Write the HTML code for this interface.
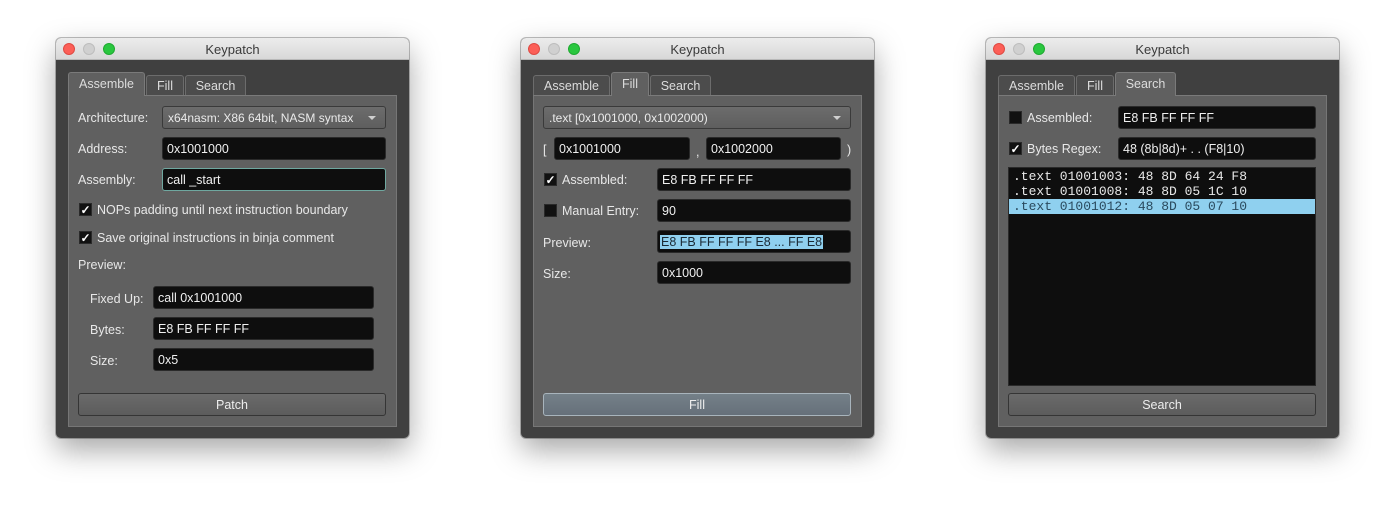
<!DOCTYPE html>
<html><head><meta charset="utf-8"><style>
*{box-sizing:border-box;margin:0;padding:0}
body{width:1395px;height:513px;background:#fff;position:relative;overflow:hidden;font-family:"Liberation Sans",sans-serif;font-size:12.5px;color:#e6e6e6}
.win{position:absolute;top:38px;width:353px;height:400px;background:#404040;border-radius:5px;box-shadow:0 12px 30px rgba(0,0,0,.35),0 0 0 1px rgba(0,0,0,.25);overflow:hidden}
.tb{position:absolute;left:0;top:0;width:353px;height:22px;background:linear-gradient(#ececec,#d8d8d8);color:#3a3a3a;text-align:center;line-height:23px;font-size:13px;border-bottom:1px solid #b8b8b8}
.dot{position:absolute;top:5px;width:12px;height:12px;border-radius:50%}
.a{position:absolute}
.pane{position:absolute;left:12px;top:57px;width:329px;height:332px;background:#606060;border:1px solid #767676;border-top-color:#7a7a7a}
.tab{position:absolute;top:37px;height:20px;background:#4c4c4c;border:1px solid #6c6c6c;border-bottom:none;border-radius:3px 3px 0 0;text-align:center;line-height:21px;color:#dcdcdc}
.tab.on{top:34px;height:24px;background:#606060;border-color:#7a7a7a;line-height:22px;z-index:2}
.f{position:absolute;height:23px;background:#0e0e0e;border-radius:3px;border:1px solid #2a2a2a;padding-left:4px;line-height:22px;color:#f0f0f0;white-space:nowrap}
.lbl{position:absolute;line-height:16px;color:#e8e8e8;white-space:nowrap}
.cb{position:absolute;width:13px;height:13px;background:#111;border:1px solid #2a2a2a;color:#fff;font-size:12px;line-height:12px;text-align:center;font-weight:bold}
.combo{position:absolute;height:23px;background:linear-gradient(#6c6c6c,#5e5e5e);border:1px solid #3a3a3a;border-radius:3px;padding-left:5px;line-height:22px;color:#eaeaea;font-size:12px;white-space:nowrap;overflow:hidden}
.combo:after{content:"";position:absolute;right:9px;top:9px;border-left:4px solid transparent;border-right:4px solid transparent;border-top:4px solid #cfcfcf}
.btn{position:absolute;left:22px;top:355px;width:308px;height:23px;background:linear-gradient(#6a6a6a,#5c5c5c);border:1px solid #353535;border-radius:3px;text-align:center;line-height:22px;color:#eee}
.mono{font-family:"Liberation Mono",monospace;font-size:13px;line-height:15px;height:15px;padding-left:4px;color:#e8e8e8;white-space:pre}
</style></head><body>

<!-- Window 1 -->
<div class="win" style="left:56px">
 <div class="tb">Keypatch</div>
 <div class="dot" style="left:7px;background:#fc5f57;border:1px solid #de4a43"></div>
 <div class="dot" style="left:27px;background:#d0d0d0;border:1px solid #bdbdbd"></div>
 <div class="dot" style="left:47px;background:#2ac73f;border:1px solid #1faa31"></div>
 <div class="pane"></div>
 <div class="tab on" style="left:12px;width:77px">Assemble</div>
 <div class="tab" style="left:90px;width:38px">Fill</div>
 <div class="tab" style="left:129px;width:61px">Search</div>
 <div class="lbl" style="left:22px;top:72px">Architecture:</div>
 <div class="combo" style="left:106px;top:68px;width:224px">x64nasm: X86 64bit, NASM syntax</div>
 <div class="lbl" style="left:22px;top:103px">Address:</div>
 <div class="f" style="left:106px;top:99px;width:224px">0x1001000</div>
 <div class="lbl" style="left:22px;top:134px">Assembly:</div>
 <div class="f" style="left:106px;top:130px;width:224px;border-color:#6fa8a0">call _start</div>
 <div class="cb" style="left:23px;top:165px">✓</div>
 <div class="lbl" style="left:41px;top:164px">NOPs padding until next instruction boundary</div>
 <div class="cb" style="left:23px;top:193px">✓</div>
 <div class="lbl" style="left:41px;top:192px">Save original instructions in binja comment</div>
 <div class="lbl" style="left:22px;top:219px">Preview:</div>
 <div class="lbl" style="left:34px;top:253px">Fixed Up:</div>
 <div class="f" style="left:97px;top:248px;width:221px">call 0x1001000</div>
 <div class="lbl" style="left:34px;top:284px">Bytes:</div>
 <div class="f" style="left:97px;top:279px;width:221px">E8 FB FF FF FF</div>
 <div class="lbl" style="left:34px;top:315px">Size:</div>
 <div class="f" style="left:97px;top:310px;width:221px">0x5</div>
 <div class="btn">Patch</div>
</div>

<!-- Window 2 -->
<div class="win" style="left:521px">
 <div class="tb">Keypatch</div>
 <div class="dot" style="left:7px;background:#fc5f57;border:1px solid #de4a43"></div>
 <div class="dot" style="left:27px;background:#d0d0d0;border:1px solid #bdbdbd"></div>
 <div class="dot" style="left:47px;background:#2ac73f;border:1px solid #1faa31"></div>
 <div class="pane"></div>
 <div class="tab" style="left:12px;width:77px">Assemble</div>
 <div class="tab on" style="left:90px;width:38px">Fill</div>
 <div class="tab" style="left:129px;width:61px">Search</div>
 <div class="combo" style="left:22px;top:68px;width:308px">.text [0x1001000, 0x1002000)</div>
 <div class="lbl" style="left:22px;top:104px">[</div>
 <div class="f" style="left:33px;top:99px;width:136px">0x1001000</div>
 <div class="lbl" style="left:175px;top:106px">,</div>
 <div class="f" style="left:185px;top:99px;width:135px">0x1002000</div>
 <div class="lbl" style="left:326px;top:104px">)</div>
 <div class="cb" style="left:23px;top:135px">✓</div>
 <div class="lbl" style="left:41px;top:134px">Assembled:</div>
 <div class="f" style="left:136px;top:130px;width:194px">E8 FB FF FF FF</div>
 <div class="cb" style="left:23px;top:166px"></div>
 <div class="lbl" style="left:41px;top:165px">Manual Entry:</div>
 <div class="f" style="left:136px;top:161px;width:194px">90</div>
 <div class="lbl" style="left:22px;top:197px">Preview:</div>
 <div class="f" style="left:136px;top:192px;width:194px;padding-left:2px"><span style="background:#8fd0ef;color:#1a2a35;padding:0 1px">E8 FB FF FF FF E8 ... FF E8</span></div>
 <div class="lbl" style="left:22px;top:228px">Size:</div>
 <div class="f" style="left:136px;top:223px;width:194px">0x1000</div>
 <div class="btn" style="background:linear-gradient(#748088,#66707a);border-color:#a8b4bc">Fill</div>
</div>

<!-- Window 3 -->
<div class="win" style="left:986px">
 <div class="tb">Keypatch</div>
 <div class="dot" style="left:7px;background:#fc5f57;border:1px solid #de4a43"></div>
 <div class="dot" style="left:27px;background:#d0d0d0;border:1px solid #bdbdbd"></div>
 <div class="dot" style="left:47px;background:#2ac73f;border:1px solid #1faa31"></div>
 <div class="pane"></div>
 <div class="tab" style="left:12px;width:77px">Assemble</div>
 <div class="tab" style="left:90px;width:38px">Fill</div>
 <div class="tab on" style="left:129px;width:61px">Search</div>
 <div class="cb" style="left:23px;top:73px"></div>
 <div class="lbl" style="left:41px;top:72px">Assembled:</div>
 <div class="f" style="left:132px;top:68px;width:198px">E8 FB FF FF FF</div>
 <div class="cb" style="left:23px;top:104px">✓</div>
 <div class="lbl" style="left:41px;top:103px">Bytes Regex:</div>
 <div class="f" style="left:132px;top:99px;width:198px">48 (8b|8d)+ . . (F8|10)</div>
 <div class="a" style="left:22px;top:129px;width:308px;height:219px;background:#0e0e0e;border:1px solid #2a2a2a;padding-top:1px">
  <div class="mono">.text 01001003: 48 8D 64 24 F8</div>
  <div class="mono">.text 01001008: 48 8D 05 1C 10</div>
  <div class="mono" style="background:#8fd0ef;color:#2a4a5e">.text 01001012: 48 8D 05 07 10</div>
 </div>
 <div class="btn">Search</div>
</div>

</body></html>
